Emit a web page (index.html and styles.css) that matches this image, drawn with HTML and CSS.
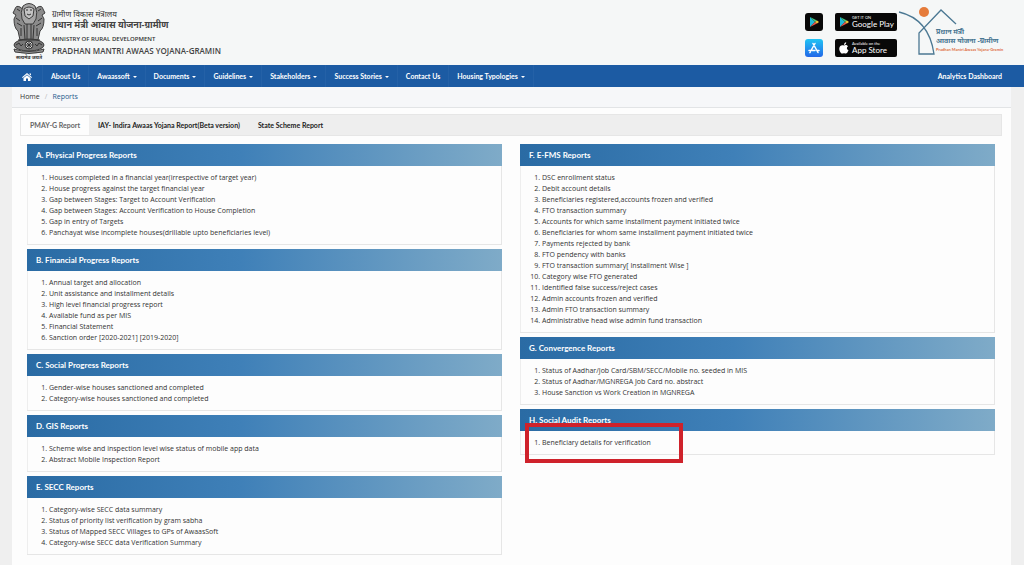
FILE: index.html
```
<!DOCTYPE html>
<html lang="en">
<head>
    <meta charset="UTF-8">
    <meta name="viewport" content="width=device-width, initial-scale=1.0">
    <title>PMAY-G Reports</title>
    <link rel="stylesheet" href="styles.css">
</head>
<body>
    <!-- Header -->
    <header class="site-header">
        <svg class="emblem" viewBox="0 0 34 58" role="img" aria-label="State Emblem of India">
            <g fill="#8b8b8b" stroke="#3d3d3d" stroke-width="1">
                <path d="M8 4 Q4 2 3 6 L1 10 L4 12 L2 16 Q2 25 6 28 L8 37 L26 37 L28 28 Q32 25 32 16 L30 12 L33 10 L31 6 Q30 2 26 4 L22 7 L12 7 Z"/>
                <path d="M11 3 Q17 -2 23 3 Q26 9 24 16 L21 21 L13 21 L10 16 Q8 9 11 3 Z" fill="#a5a5a5"/>
                <path d="M12 6 Q17 2 22 6 L21 13 L17 16 L13 13 Z" fill="#c4c4c4"/>
                <ellipse cx="17" cy="42" rx="15" ry="6" fill="#777"/>
                <circle cx="17" cy="42" r="4" fill="#d0d0d0"/>
                <path d="M2 46 Q17 51 32 46 L31 49 Q17 52 3 49 Z" fill="#999"/>
            </g>
            <g fill="none" stroke="#333" stroke-width="1">
                <path d="M14 7h2M18 7h2M15 11q2 2 4 0M5 6l3 2M29 6l-3 2M4 15l4 3M30 15l-4 3M5 20l5 3M29 20l-5 3M12 22l1 14M15 21v15M19 21v15M22 22l-1 14M9 25v8M25 25v8"/>
                <path d="M17 38v8M13 42h8M14 39l6 6M20 39l-6 6M4 42l3-2 2 3 2-2M30 42l-3-2-2 3-2-2M6 37h22"/>
            </g>
            <text x="17" y="56" text-anchor="middle" font-size="5" font-weight="bold" fill="#333">सत्यमेव जयते</text>
        </svg>
        <div class="brand">
            <span class="brand-small hindi">ग्रामीण विकास मंत्रालय</span>
            <span class="brand-large hindi">प्रधान मंत्री आवास योजना-ग्रामीण</span>
            <span class="brand-small ministry">MINISTRY OF RURAL DEVELOPMENT</span>
            <span class="brand-large">PRADHAN MANTRI AWAAS YOJANA-GRAMIN</span>
        </div>

        <div class="apps">
            <a href="#" class="app-icon play-icon" aria-label="Android app">
                <svg viewBox="0 0 12 12"><path d="M2 1v10l5-5z" fill="#20b8d8"/><path d="M2 1l5 5 2-1.600z" fill="#43c67a"/><path d="M2 11l5-5 2 1.600z" fill="#ea5548"/><path d="M7 6l2-1.600L11 6 9 7.600z" fill="#f5c43a"/></svg>
            </a>
            <a href="#" class="badge">
                <svg viewBox="0 0 12 12"><path d="M2 1v10l5-5z" fill="#20b8d8"/><path d="M2 1l5 5 2-1.600z" fill="#43c67a"/><path d="M2 11l5-5 2 1.600z" fill="#ea5548"/><path d="M7 6l2-1.600L11 6 9 7.600z" fill="#f5c43a"/></svg>
                <span><small>GET IT ON</small>Google Play</span>
            </a>
            <a href="#" class="app-icon store-icon" aria-label="iOS app">
                <svg viewBox="0 0 12 12" fill="none" stroke="#fff" stroke-width="1.500" stroke-linecap="round"><path d="M7 1.500L3 8.500M5 1.500l5 9M1 8.500h6M9.500 8.500H11M2.300 10l-.4.700"/></svg>
            </a>
            <a href="#" class="badge">
                <svg viewBox="0 0 12 12" fill="#fff"><path d="M6 3.600C7 3 8.800 2.700 10 4.300 8.300 5.300 8.500 7.600 10.500 8.300 9.700 10.300 8.800 11.600 7.800 11.600 7 11.600 6.800 11.200 6 11.200S5 11.600 4.300 11.600C2.800 11.600 1 8.600 1.300 6.200 1.600 3.600 3.900 2.600 6 3.600zM6 3C6 1.500 7 .5 8.200.3 8.300 1.800 7.300 3 6 3z"/></svg>
                <span><small>Available on the</small>App Store</span>
            </a>
        </div>

        <svg class="scheme-logo" viewBox="0 0 106 52" role="img" aria-label="Pradhan Mantri Awaas Yojana-Gramin">
            <circle cx="26" cy="7" r="5" fill="#e57b3a"/>
            <path d="M1 7Q31 14 36 49H21V28L43 5 58 19" fill="none" stroke="#4b7893" stroke-width="1.300"/>
            <g class="hindi" fill="#4b7893" font-weight="bold" font-size="7">
                <text x="38" y="29">प्रधान मंत्री</text>
                <text x="38" y="38">आवास योजना -ग्रामीण</text>
            </g>
            <text class="logo-english" x="38" y="46">Pradhan Mantri Awaas Yojana-Gramin</text>
        </svg>
    </header>

    <!-- Main Navigation -->
    <nav class="navbar">
        <a href="#" aria-label="Home" class="home"><svg viewBox="0 0 10 8" fill="#fff"><path d="M5 0l5 4.300-.7.700L5 1.400.700 5 0 4.300zM7.500.5H9v2L7.500 1.200zM5 2.200l3.500 2.900V8H6V5.500H4V8H1.500V5.100z"/></svg></a>
        <a href="#">About Us</a>
        <a href="#" class="drop">Awaassoft</a>
        <a href="#" class="drop">Documents</a>
        <a href="#" class="drop">Guidelines</a>
        <a href="#" class="drop">Stakeholders</a>
        <a href="#" class="drop">Success Stories</a>
        <a href="#">Contact Us</a>
        <a href="#" class="drop">Housing Typologies</a>
        <a href="#" class="analytics">Analytics Dashboard</a>
    </nav>

    <main class="container">
        <div class="breadcrumb"><a href="#">Home</a><span class="slash">/</span><a href="#" class="current">Reports</a></div>

        <div class="tabs">
            <a href="#" class="tab active">PMAY-G Report</a>
            <a href="#" class="tab">IAY- Indira Awaas Yojana Report(Beta version)</a>
            <a href="#" class="tab">State Scheme Report</a>
        </div>

        <div class="reports">
            <div class="column">
                <section class="panel">
                    <h2>A. Physical Progress Reports</h2>
                    <ol>
                        <li><a href="#">Houses completed in a financial year(irrespective of target year)</a></li>
                        <li><a href="#">House progress against the target financial year</a></li>
                        <li><a href="#">Gap between Stages: Target to Account Verification</a></li>
                        <li><a href="#">Gap between Stages: Account Verification to House Completion</a></li>
                        <li><a href="#">Gap in entry of Targets</a></li>
                        <li><a href="#">Panchayat wise incomplete houses(drillable upto beneficiaries level)</a></li>
                    </ol>
                </section>
                <section class="panel">
                    <h2>B. Financial Progress Reports</h2>
                    <ol>
                        <li><a href="#">Annual target and allocation</a></li>
                        <li><a href="#">Unit assistance and installment details</a></li>
                        <li><a href="#">High level financial progress report</a></li>
                        <li><a href="#">Available fund as per MIS</a></li>
                        <li><a href="#">Financial Statement</a></li>
                        <li>Sanction order <a href="#">[2020-2021]</a> <a href="#">[2019-2020]</a></li>
                    </ol>
                </section>
                <section class="panel">
                    <h2>C. Social Progress Reports</h2>
                    <ol>
                        <li><a href="#">Gender-wise houses sanctioned and completed</a></li>
                        <li><a href="#">Category-wise houses sanctioned and completed</a></li>
                    </ol>
                </section>
                <section class="panel">
                    <h2>D. GIS Reports</h2>
                    <ol>
                        <li><a href="#">Scheme wise and inspection level wise status of mobile app data</a></li>
                        <li><a href="#">Abstract Mobile Inspection Report</a></li>
                    </ol>
                </section>
                <section class="panel">
                    <h2>E. SECC Reports</h2>
                    <ol>
                        <li><a href="#">Category-wise SECC data summary</a></li>
                        <li><a href="#">Status of priority list verification by gram sabha</a></li>
                        <li><a href="#">Status of Mapped SECC Villages to GPs of AwaasSoft</a></li>
                        <li><a href="#">Category-wise SECC data Verification Summary</a></li>
                    </ol>
                </section>
            </div>

            <div class="column">
                <section class="panel">
                    <h2>F. E-FMS Reports</h2>
                    <ol>
                        <li><a href="#">DSC enrollment status</a></li>
                        <li><a href="#">Debit account details</a></li>
                        <li><a href="#">Beneficiaries registered,accounts frozen and verified</a></li>
                        <li><a href="#">FTO transaction summary</a></li>
                        <li><a href="#">Accounts for which same installment payment initiated twice</a></li>
                        <li><a href="#">Beneficiaries for whom same installment payment initiated twice</a></li>
                        <li><a href="#">Payments rejected by bank</a></li>
                        <li><a href="#">FTO pendency with banks</a></li>
                        <li><a href="#">FTO transaction summary[ Installment Wise ]</a></li>
                        <li><a href="#">Category wise FTO generated</a></li>
                        <li><a href="#">Identified false success/reject cases</a></li>
                        <li><a href="#">Admin accounts frozen and verified</a></li>
                        <li><a href="#">Admin FTO transaction summary</a></li>
                        <li><a href="#">Administrative head wise admin fund transaction</a></li>
                    </ol>
                </section>
                <section class="panel">
                    <h2>G. Convergence Reports</h2>
                    <ol>
                        <li><a href="#">Status of Aadhar/Job Card/SBM/SECC/Mobile no. seeded in MIS</a></li>
                        <li><a href="#">Status of Aadhar/MGNREGA Job Card no. abstract</a></li>
                        <li><a href="#">House Sanction vs Work Creation in MGNREGA</a></li>
                    </ol>
                </section>
                <section class="panel marked">
                    <h2>H. Social Audit Reports</h2>
                    <ol>
                        <li><a href="#">Beneficiary details for verification</a></li>
                    </ol>
                </section>
            </div>
        </div>
    </main>
</body>
</html>
```
FILE: styles.css
```
* {
    box-sizing: border-box;
}

body {
    margin: 0;
    min-height: 100vh;
    display: flex;
    flex-direction: column;
    background: #efefef;
    font-family: "Open Sans", "Noto Sans", sans-serif;
    font-size: 7px;
    line-height: 11px;
    color: #333;
}

a {
    color: inherit;
    text-decoration: none;
}

/* Header */
.site-header {
    display: flex;
    height: 65px;
    padding: 0 20px 0 12px;
    background: #f5f7f7;
}

.emblem {
    width: 34px;
    height: 58px;
    margin-top: 3px;
}

.brand {
    display: flex;
    flex-direction: column;
    margin: 8px auto 0 6px;
    white-space: nowrap;
}

.brand-small {
    font-size: 8px;
    line-height: 11px;
    color: #333;
}

.brand-large {
    font-size: 8px;
    line-height: 11px;
    font-weight: 600;
    color: #444;
}

.brand .ministry {
    margin-top: 4px;
    font-size: 6px;
    font-weight: 600;
}

.hindi {
    font-family: "Noto Sans", "Noto Sans Devanagari", sans-serif;
}

.brand-large.hindi {
    font-size: 9px;
    font-weight: 700;
}

/* App links */
.apps {
    display: grid;
    grid-template-columns: 18px 62px;
    grid-template-rows: 18px 18px;
    gap: 8px 12px;
    margin-top: 13px;
}

.app-icon {
    display: flex;
    align-items: center;
    justify-content: center;
    border-radius: 3px;
}

.app-icon svg {
    width: 12px;
    height: 12px;
}

.play-icon {
    background: #080808;
}

.store-icon {
    background: linear-gradient(#20c4f4, #2368e8);
}

.badge {
    display: flex;
    align-items: center;
    gap: 2px;
    padding-left: 3px;
    border-radius: 2px;
    background: #080808;
    color: #fff;
    font-family: Lato, sans-serif;
    font-size: 8px;
    line-height: 8px;
    white-space: nowrap;
}

.badge svg {
    width: 12px;
    height: 12px;
}

.badge small {
    display: block;
    font-size: 4px;
    line-height: 4px;
}

.scheme-logo {
    width: 106px;
    height: 52px;
    margin: 5px 0 0 1px;
}

.logo-english {
    fill: #de6a3c;
    font-family: "Liberation Sans Narrow", Lato, sans-serif;
    font-size: 4px;
    font-weight: 700;
}

/* Navigation */
.navbar {
    display: flex;
    height: 22px;
    padding: 0 14px 0 12px;
    background: #1c5ba3;
    color: #fff;
    font-family: Lato, sans-serif;
    font-weight: 700;
    line-height: 22px;
    white-space: nowrap;
}

.navbar a {
    padding: 0 8px;
    border-right: 1px solid #2461a7;
}

.navbar .home {
    padding: 0 10px;
}

.navbar .home svg {
    width: 10px;
    height: 8px;
    vertical-align: middle;
}

.drop::after {
    content: "";
    display: inline-block;
    margin-left: 3px;
    vertical-align: middle;
    border-top: 2px solid #fff;
    border-left: 2px solid transparent;
    border-right: 2px solid transparent;
}

.navbar .analytics {
    margin-left: auto;
    border-right: 0;
}

/* Page content */
.container {
    flex: 1;
    margin: 0 13px 0 12px;
    background: #fdfdfd;
}

.breadcrumb {
    height: 21px;
    padding-left: 8px;
    border-bottom: 1px solid #e2e4e6;
    background: #f6f7f9;
    line-height: 20px;
}

.slash {
    margin: 0 5px;
    color: #bbb;
}

.breadcrumb .current {
    color: #1d5a8c;
}

.tabs {
    display: flex;
    height: 22px;
    margin: 6px 9px 8px 8px;
    border: 1px solid #e6e6e6;
    background: #eee;
    font-family: Lato, sans-serif;
    line-height: 20px;
    white-space: nowrap;
}

.tab {
    padding: 0 9px;
    color: #222;
    font-weight: 700;
}

.tab.active {
    background: #fdfdfd;
    color: #666;
}

.reports {
    display: grid;
    grid-template-columns: 1fr 1fr;
    gap: 18px;
    padding: 0 16px 12px 15px;
}

/* Report panels */
.column {
    display: flex;
    flex-direction: column;
    gap: 4px;
}

.panel {
    position: relative;
    border-bottom: 1px solid #e6e6e6;
    box-shadow: inset 1px 0 #eee, inset -1px 0 #e6e6e6;
}

.panel h2 {
    margin: 0;
    padding-left: 9px;
    background: linear-gradient(90deg, #2a6ba4, #3f80b8 45%, #7fabc8);
    color: #fff;
    font-family: Lato, sans-serif;
    font-size: 8px;
    line-height: 22px;
}

.panel ol {
    margin: 0;
    padding: 6px 0 6px 22px;
}

/* Red highlight drawn over the social audit item */
.marked::after {
    content: "";
    position: absolute;
    box-sizing: border-box;
    top: 14px;
    left: 5px;
    width: 158px;
    height: 40px;
    border: 4px solid #cf222b;
}
```
